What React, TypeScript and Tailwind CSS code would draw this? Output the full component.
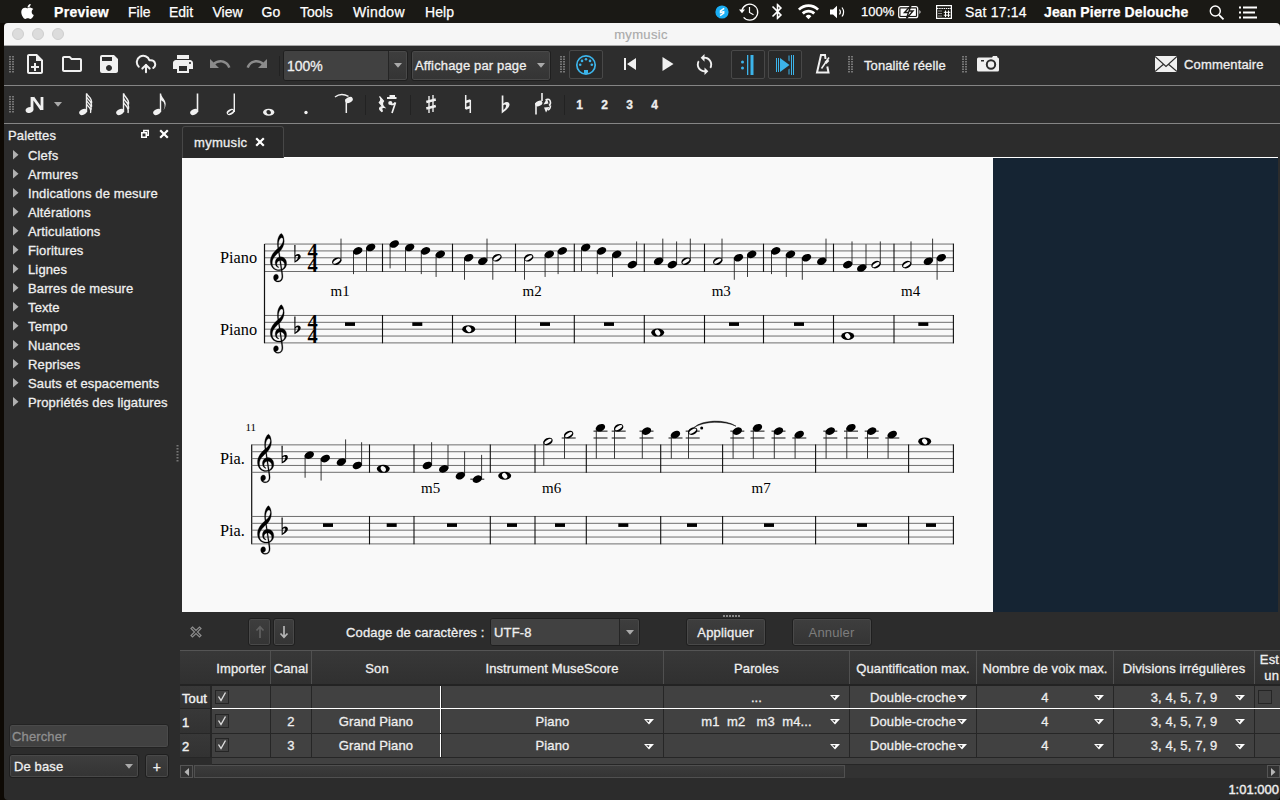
import React from "react";
import { FaApple } from "react-icons/fa";
import {
  MdBluetooth,
  MdLoop,
  MdOutlineFolder,
  MdOutlineNoteAdd,
  MdPrint,
  MdRedo,
  MdSave,
  MdUndo,
  MdWifi,
} from "react-icons/md";
import { CloudUpload } from "lucide-react";

/* ---------- menu bar ---------- */

function MenuBar() {
  return (
    <div className="flex h-[23px] shrink-0 items-center bg-[#1a1915] text-[14px] text-white [-webkit-text-stroke:0.25px_#fff]">
      <div className="flex w-[54px] justify-center pb-px">
        <FaApple size={17} />
      </div>
      <div className="w-[74px] font-bold tracking-[0.3px]">Preview</div>
      <div className="w-[41px]">File</div>
      <div className="w-[43.5px]">Edit</div>
      <div className="w-[49px]">View</div>
      <div className="w-[38.5px]">Go</div>
      <div className="w-[53px]">Tools</div>
      <div className="w-[72px] tracking-[0.35px]">Window</div>
      <div className="w-[287px] tracking-[0.1px]">Help</div>
      <svg className="h-[22px] w-[146px] shrink-0" viewBox="712 0 146 22" fill="none" stroke="#fff">
        <circle cx="722" cy="11" r="6.6" fill="#1aaef5" stroke="none" />
        <path d="M724.2 7.3l-3.7 2.5v1.7l3.2-.8v1.5l-3.6 2.4" strokeWidth="1.5" />
        <path d="M742 9a8 8 0 1 1 1.6 7.3" strokeWidth="1.3" />
        <path d="M739 8.5h6l-3 3.8z" fill="#fff" stroke="none" />
        <path d="M749.5 6v5.5l4 2.3" strokeWidth="1.2" />
      </svg>
      <div className="-ml-[90px] flex w-[96px] items-center">
        <div className="flex w-[29px] justify-start">
          <MdBluetooth size={19} strokeWidth={0} />
        </div>
        <MdWifi size={23} strokeWidth={0} />
        <svg className="ml-[8px] h-[22px] w-[24px]" viewBox="827 0 24 22" fill="none" stroke="#fff">
          <path d="M829 8.5h3l4-3.7v12.4l-4-3.7h-3z" fill="#fff" stroke="none" />
          <path d="M838.5 8.5q1.8 2.5 0 5M841 6.5q3.2 4.5 0 9" strokeWidth="1.2" />
        </svg>
      </div>
      <div className="-ml-[3px] w-[37px] text-[13px]">100%</div>
      <svg className="h-[22px] w-[67px] shrink-0" viewBox="898 0 67 22" fill="none" stroke="#fff">
        <rect x="898.7" y="5.7" width="19" height="11" rx="2" strokeWidth="1.2" />
        <path d="M919.5 9v4q2-2 0-4z" fill="#fff" stroke="none" />
        <rect x="900.5" y="7.5" width="15.4" height="7.4" fill="#fff" stroke="none" />
        <path d="M911 4.5l-6.5 7h4l-2 6 6.5-7.500h-4z" fill="#fff" stroke="#1a1915" strokeWidth="1.4" />
        <rect x="936.6" y="4.600" width="14.800" height="12.800" strokeWidth="1.2" />
        <path d="M937 7.500h14" strokeWidth="1" strokeDasharray="1.500 .7" />
        <path d="M938.500 10h4M938.500 12.500h4M938.500 15h4" strokeWidth="1" strokeDasharray="1 1" />
        <path d="M945.500 9.500v6.500M948.500 9.500v6.500M943.800 11.300h6.500M943.800 14.200h6.500" strokeWidth="1" />
      </svg>
      <div className="w-[79px] whitespace-nowrap tracking-[0.2px]">Sat 17:14</div>
      <div className="w-[164px] whitespace-nowrap font-bold tracking-[0.1px]">Jean Pierre Delouche</div>
      <svg className="h-[22px] w-[60px] shrink-0" viewBox="1208 0 60 22" fill="none" stroke="#fff">
        <circle cx="1215.300" cy="10" r="5" strokeWidth="1.4" />
        <path d="M1219 13.800l4.500 4.500" strokeWidth="1.700" />
        <path d="M1243 6.500h14M1243 11.500h12M1243 16.500h14" strokeWidth="1.800" />
        <path d="M1239 6.500h2M1239 11.500h2M1239 16.500h2" strokeWidth="1.800" />
      </svg>
    </div>
  );
}

/* ---------- toolbar parts ---------- */

function Handle({ className = "" }: { className?: string }) {
  const rows = [0, 1, 2, 3, 4, 5, 6];
  return (
    <svg className={`h-[18px] w-[5px] shrink-0 ${className}`} viewBox="0 0 5 18" fill="#777">
      {rows.map((r) => (
        <g key={r}>
          <rect x="0" y={r * 2.5} width="2" height="1.5" />
          <rect x="3" y={r * 2.5} width="2" height="1.5" />
        </g>
      ))}
    </svg>
  );
}

function Slot({ className, children }: { className: string; children?: React.ReactNode }) {
  return <div className={`flex h-full shrink-0 items-center justify-center pb-[3px] ${className}`}>{children}</div>;
}

function Caret({ className = "" }: { className?: string }) {
  return (
    <svg className={`h-[5px] w-[8px] shrink-0 ${className}`} viewBox="0 0 8 5">
      <path d="M0 0h8L4 4.800z" fill="#aaa" />
    </svg>
  );
}

function ToggleButton({ className = "", children }: { className?: string; children: React.ReactNode }) {
  return (
    <div className={`mb-[2px] flex h-[29px] w-[34px] shrink-0 items-center justify-center rounded-[2px] border border-[#484848] bg-[#292929] ${className}`}>
      {children}
    </div>
  );
}

const combo = "border border-[#1f1f1f] rounded-[3px] bg-linear-to-b from-[#3e3e3e] to-[#343434] shadow-[inset_0_0_0_1px_#494949]";

function MainToolbar() {
  return (
    <div className="flex h-[40px] shrink-0 items-center border-b border-[#858585] bg-[#2d2d2d] pl-[5px] text-[#efefef]">
      <Handle className="mb-[2px]" />
      <Slot className="ml-[2px] w-[37px]"><MdOutlineNoteAdd size={24} color="#f0f0f0" /></Slot>
      <Slot className="w-[37px]"><MdOutlineFolder size={24} color="#f0f0f0" /></Slot>
      <Slot className="w-[37px]"><MdSave size={24} color="#f0f0f0" /></Slot>
      <Slot className="w-[37px]"><CloudUpload size={22} strokeWidth={2.2} color="#f0f0f0" /></Slot>
      <Slot className="w-[37px]"><MdPrint size={24} color="#f0f0f0" /></Slot>
      <Slot className="w-[37px]"><MdUndo size={24} color="#8b8b8b" /></Slot>
      <Slot className="w-[37px]"><MdRedo size={24} color="#8b8b8b" /></Slot>
      <div className="ml-[4px] h-[20px] w-px bg-[#222]" />
      <div className={`ml-[3px] mb-px flex h-[31px] w-[125px] shrink-0 items-center overflow-hidden ${combo}`}>
        <div className="flex h-full flex-1 items-center border-r border-[#252525] bg-[#414141] pl-[3px] pt-px text-[14px]">100%</div>
        <div className="flex h-full w-[18px] items-center justify-center"><Caret /></div>
      </div>
      <div className={`ml-[3px] mb-px flex h-[31px] w-[140px] shrink-0 items-center whitespace-nowrap pl-[3px] pt-px text-[13px] tracking-[0.15px] ${combo}`}>
        Affichage par page
        <Caret className="ml-auto mr-[5px]" />
      </div>
      <Handle className="mb-[2px] ml-[9px]" />
      <ToggleButton className="ml-[4px]">
        <svg width="22" height="22" viewBox="0 0 22 22">
          <circle cx="11" cy="11" r="9.200" fill="none" stroke="#3cb4ea" strokeWidth="1.700" />
          <g fill="#3cb4ea">
            <circle cx="5.200" cy="10.700" r="1.300" />
            <circle cx="7" cy="6.900" r="1.300" />
            <circle cx="11" cy="5.200" r="1.300" />
            <circle cx="15" cy="6.900" r="1.300" />
            <circle cx="16.800" cy="10.700" r="1.300" />
            <path d="M9 20v-4h4v4z" />
          </g>
        </svg>
      </ToggleButton>
      <Slot className="ml-[8px] w-[38px]">
        <svg width="14" height="14" viewBox="0 0 14 14" fill="#f0f0f0"><path d="M1 1h2v12H1zM13 1v12L4 7z" /></svg>
      </Slot>
      <Slot className="w-[38px]">
        <svg width="12" height="14" viewBox="0 0 12 14" fill="#f0f0f0"><path d="M.5 0v14L11.500 7z" /></svg>
      </Slot>
      <Slot className="w-[35px]"><MdLoop size={23} color="#f0f0f0" /></Slot>
      <ToggleButton className="ml-[9px]">
        <svg width="16" height="22" viewBox="0 0 16 22" fill="#3cb4ea">
          <circle cx="2.500" cy="8" r="1.500" /><circle cx="2.500" cy="14" r="1.500" />
          <rect x="7" y="1" width="1.300" height="20" /><rect x="10.500" y="1" width="3" height="20" />
        </svg>
      </ToggleButton>
      <ToggleButton className="ml-[3px]">
        <svg width="20" height="22" viewBox="0 0 20 22" fill="#3cb4ea">
          <rect x="1" y="4" width="1" height="14" /><rect x="3" y="4" width="1" height="14" />
          <path d="M5 4v14L14.500 11z" />
          <path d="M13.500 1.500h1v6l-1-1zM13.500 15.500l1-1v6h-1zM16 1h1v20h-1zM18 1h1v20h-1z" />
        </svg>
      </ToggleButton>
      <Slot className="w-[41px]">
        <svg width="16" height="22" viewBox="0 0 16 22" fill="none" stroke="#f0f0f0">
          <path d="M10.500 6L10 2H6L2 19.500h11.500l-1.200-6" strokeWidth="2" />
          <path d="M6.500 15.500L14 4.500" strokeWidth="1.500" />
          <path d="M9.500 9l3-3 1.800 2-3 3z" fill="#f0f0f0" stroke="none" />
        </svg>
      </Slot>
      <Handle className="mb-[2px] ml-[5px]" />
      <div className="ml-[11px] w-[98px] shrink-0 whitespace-nowrap text-[13px] tracking-[0.1px]">Tonalité réelle</div>
      <Handle className="mb-[2px]" />
      <svg className="mb-[3px] ml-[10px] shrink-0" width="22" height="18" viewBox="0 0 22 18">
        <path d="M1.500 2.500H15L16 1h4l.5 1.500q1.500 0 1.500 1.500v11q0 1.500-1.500 1.500h-19Q0 16.500 0 15V4q0-1.500 1.500-1.500z" fill="#f0f0f0" />
        <circle cx="14" cy="9.500" r="4.200" fill="none" stroke="#2d2d2d" strokeWidth="2" />
        <path d="M4 5h3v1.500H4z" fill="#2d2d2d" />
      </svg>
      <svg className="mb-[3px] ml-[156px] shrink-0" width="22" height="16" viewBox="0 0 22 16">
        <rect width="22" height="16" fill="#f0f0f0" />
        <path d="M0 .5l11 10 11-10M0 15.500l8.500-7.200M22 15.500l-8.500-7.200" fill="none" stroke="#2d2d2d" strokeWidth="1.200" />
      </svg>
      <div className="mb-[2px] ml-[7px] text-[13px] tracking-[0.15px]">Commentaire</div>
    </div>
  );
}

/* Note-input icons share one coordinate space: x runs along the bar, y from its top edge. */
function Glyph({ x, w, children }: { x: number; w: number; children: React.ReactNode }) {
  return (
    <svg className="shrink-0" width={w} height="37" viewBox={`${x} 86 ${w} 37`} fill="#f0f0f0" stroke="none">
      {children}
    </svg>
  );
}

function SmallHead({ x, y, hollow = false }: { x: number; y: number; hollow?: boolean }) {
  return (
    <>
      <ellipse cx={x} cy={y} rx="4" ry="2.700" transform={`rotate(-25 ${x} ${y})`} />
      {hollow && <ellipse cx={x} cy={y} rx="3" ry="1" transform={`rotate(-32 ${x} ${y})`} fill="#2d2d2d" />}
    </>
  );
}

function NoteToolbar() {
  const line = { fill: "none", stroke: "#f0f0f0" };
  return (
    <div className="flex h-[38px] shrink-0 items-center border-b border-[#858585] bg-[#2d2d2d] pl-[5px] text-[#efefef]">
      <Handle />
      <div className="w-[3px]" />
      <Glyph x={17} w={37}>
        <path d="M32 97v12.500M33 97.500l8.500 12M42 97v13" {...line} strokeWidth="2.800" />
        <ellipse cx="29.500" cy="110" rx="4" ry="2.800" transform="rotate(-20 29.500 110)" />
      </Glyph>
      <Caret />
      <div className="w-[6px]" />
      <Glyph x={68} w={37}>
        <SmallHead x={83} y={112} />
        <path d="M86.500 93.500V112" {...line} strokeWidth="1.400" />
        <path d="M86.500 93.500c1 3 6 4 5 10M86.500 97c1 3 6 4 5 10M86.500 100.500c1 3 6 4 4.500 9.500M86.500 104c1 3 5.500 3 4 9" {...line} strokeWidth="1.300" />
      </Glyph>
      <Glyph x={105} w={37}>
        <SmallHead x={120} y={112} />
        <path d="M123.500 93.500V112" {...line} strokeWidth="1.400" />
        <path d="M123.500 93.500c1 4 6 5 5 11M123.500 98c1 4 6 4 5 11M123.500 102.500c1 3 6 4 4.500 10.500" {...line} strokeWidth="1.400" />
      </Glyph>
      <Glyph x={142} w={37}>
        <SmallHead x={157} y={112} />
        <path d="M160.500 93.500V112" {...line} strokeWidth="1.400" />
        <path d="M160 94h1c1 4 4.500 5.500 4.700 10q0 3.500-2.200 6.500q1.700-3.500 1-6-1-3.500-4.500-5z" />
      </Glyph>
      <Glyph x={179} w={37}>
        <SmallHead x={194} y={112} />
        <path d="M197.500 93.500V112" {...line} strokeWidth="1.600" />
      </Glyph>
      <Glyph x={216} w={37}>
        <SmallHead x={230.500} y={112} hollow />
        <path d="M234.300 93.500V112" {...line} strokeWidth="1.400" />
      </Glyph>
      <Glyph x={253} w={37}>
        <path fillRule="evenodd" d="M263 112.200a5.700 3.500 0 1 0 11.400 0a5.700 3.500 0 1 0-11.400 0zM266.500 111q1.500-1.800 3.400-.5 1.600 1.500.9 3-1.500 1.500-3.300.4-1.500-1.400-1-2.900z" />
      </Glyph>
      <Glyph x={290} w={37}><circle cx="306" cy="112.500" r="1.700" /></Glyph>
      <Glyph x={327} w={37}>
        <path d="M335 97q6-4.500 13.500-.6" {...line} strokeWidth="1.500" />
        <path d="M346.300 99V113" {...line} strokeWidth="1.500" />
        <SmallHead x={349} y={100} />
      </Glyph>
      <div className="mx-[1px] h-[20px] w-px bg-[#222]" />
      <Glyph x={367} w={42}>
        <path d="M381 95l4 4.500q-2.500 3 1 6.500-4-.8-2.200 3.500l-.5.500q-5-4 .7-5l-3.200-4q3-2.500.2-6z" stroke="#f0f0f0" strokeWidth="1.200" transform="translate(-1.500 1.500)" />
        <path d="M387 98h9.500M389.500 96h5.500" {...line} strokeWidth="2" />
        <circle cx="390.300" cy="103" r="2.100" />
        <path d="M391 104.500q3.500 0 4.500-2l-3.500 10.500" {...line} strokeWidth="1.700" />
      </Glyph>
      <div className="mx-[1px] h-[20px] w-px bg-[#222]" />
      <Glyph x={412} w={37}>
        <path d="M429 96v17M433 95v17" {...line} strokeWidth="1.400" />
        <path d="M426.300 102l9.500-2.500M426.300 108.500l9.500-2.500" {...line} strokeWidth="2.500" />
      </Glyph>
      <Glyph x={449} w={37}>
        <path d="M465.700 95v14M470.300 100v13" {...line} strokeWidth="1.500" />
        <path d="M465.500 102l5-1.500M465.500 108.500l5-1.500" {...line} strokeWidth="2.500" />
      </Glyph>
      <Glyph x={486} w={37}>
        <path fillRule="evenodd" d="M501.700 95.500h1.700v8q2.500-2 4.800-1.200 2.500 1.500.4 5-2 3-6.900 6.200zM503.400 105.200v4.900q3-2.700 2.700-4.700-.8-1.700-2.700-.2z" />
      </Glyph>
      <Glyph x={523} w={41}>
        <path d="M536 103v11.500M542 93v8" {...line} strokeWidth="1.600" />
        <ellipse cx="538.800" cy="103.500" rx="3.800" ry="2.500" transform="rotate(-25 538.800 103.500)" />
        <path d="M545.500 100q3-1.500 4.500.5 1.500 3-1 5M550.500 105.500q0 3.500-2.500 4.500" {...line} strokeWidth="1.500" />
        <path d="M543.500 104.500l3.500-6 1.500 5zM549.500 107l-5.500.5 2 5z" />
      </Glyph>
      <div className="h-[20px] w-px bg-[#222]" />
      <div className="ml-[2px] flex text-center text-[12px] font-bold">
        <span className="w-[25px]">1</span>
        <span className="w-[25px]">2</span>
        <span className="w-[25px]">3</span>
        <span className="w-[25px]">4</span>
      </div>
    </div>
  );
}

/* ---------- palettes ---------- */

const palettes = [
  "Clefs", "Armures", "Indications de mesure", "Altérations", "Articulations", "Fioritures", "Lignes",
  "Barres de mesure", "Texte", "Tempo", "Nuances", "Reprises", "Sauts et espacements", "Propriétés des ligatures",
];

function Cross({ className = "", size = 10 }: { className?: string; size?: number }) {
  return (
    <svg className={`shrink-0 ${className}`} width={size} height={size} viewBox="0 0 10 10">
      <path d="M1.200 1.200l7.600 7.600M8.800 1.200l-7.600 7.600" stroke="#fff" strokeWidth="2.200" />
    </svg>
  );
}

function Palettes() {
  return (
    <div className="flex w-[172px] shrink-0 flex-col text-[13px] tracking-[0.13px] text-[#efefef]">
      <div className="flex h-[22px] items-center pl-[4px]">
        <span className="w-[133px]">Palettes</span>
        <svg className="mb-[2px] shrink-0" width="8" height="10" viewBox="0 0 8 10" fill="none" stroke="#fff" strokeWidth="1.500">
          <path d="M.75 3.800h4.500v4.500H.75zM2.800 3.300V1.500h4.500v4.800H5.500" />
        </svg>
        <Cross className="mb-[2px] ml-[10px]" />
      </div>
      {palettes.map((p) => (
        <div key={p} className="flex h-[19px] shrink-0 items-center whitespace-nowrap pl-[9px]">
          <svg className="mb-px mr-[9px] shrink-0" width="6" height="10" viewBox="0 0 6 10"><path d="M0 0l5.500 4.800L0 9.500z" fill="#b0b0b0" /></svg>
          <span>{p}</span>
        </div>
      ))}
      <div className="ml-[5px] mt-auto flex h-[24px] w-[160px] items-center rounded-[3px] border border-[#232323] bg-[#414141] pl-[2px] text-[#8f8f8f] shadow-[inset_0_0_0_1px_#4a4a4a]">
        Chercher
      </div>
      <div className="mb-[22px] ml-[5px] mt-[6px] flex h-[24px]">
        <div className={`flex w-[130px] items-center pl-[4px] ${combo}`}>
          De base
          <Caret className="ml-auto mr-[5px]" />
        </div>
        <div className={`ml-[6px] flex w-[24px] items-center justify-center pt-px text-[14px] ${combo}`}>+</div>
      </div>
    </div>
  );
}

/* ---------- score ---------- */

const SPACE = 6.86;

/* kind: q = quarter, h = half, w = whole; pos counts half-spaces up from the bottom line */
type Note = [x: number, pos: number, kind: "q" | "h" | "w", up?: boolean];

function NoteShape({ note, bottom }: { note: Note; bottom: number }) {
  const [x, pos, kind, up] = note;
  const y = bottom - (pos * SPACE) / 2;
  const ledgers: number[] = [];
  for (let p = 10; p <= pos; p += 2) ledgers.push(p);
  for (let p = -2; p >= pos; p -= 2) ledgers.push(p);
  const len = pos > 10 ? bottom - y - 2 * SPACE : Math.min(24.3, 22 + 0.6 * Math.abs(pos - 4));
  const tip = up ? y - len : y + len;
  const sx = up ? x + 4.3 : x - 4.2;
  return (
    <g>
      {ledgers.map((p) => (
        <path key={p} d={`M${x - 7} ${bottom - (p * SPACE) / 2}h14`} stroke="#111" strokeWidth="1" />
      ))}
      {kind === "w" ? (
        <>
          <ellipse cx={x} cy={y} rx="6.500" ry="4" />
          <ellipse cx={x} cy={y} rx="3.100" ry="2.300" fill="#f9f9f9" transform={`rotate(55 ${x} ${y})`} />
        </>
      ) : (
        <>
          <path d={`M${sx} ${y}V${tip}`} stroke="#222" strokeWidth=".9" />
          <ellipse cx={x} cy={y} rx="4.900" ry="3.500" transform={`rotate(-25 ${x} ${y})`} />
          {kind === "h" && (
            <ellipse cx={x} cy={y} rx="4" ry="1.600" fill="#f9f9f9" transform={`rotate(-32 ${x} ${y})`} />
          )}
        </>
      )}
    </g>
  );
}

function Staff({ left, bottom, bars, notes, rests, time }: {
  left: number; bottom: number; bars: number[]; notes: Note[]; rests: number[]; time?: boolean;
}) {
  const top = bottom - 4 * SPACE;
  const g = bottom - SPACE;
  const mid = bottom - 2 * SPACE;
  return (
    <g>
      {[0, 1, 2, 3, 4].map((i) => (
        <path key={i} d={`M${left} ${bottom - i * SPACE}H954`} stroke="#666" strokeWidth=".95" />
      ))}
      {bars.map((b) => (
        <path key={b} d={`M${b} ${top - 0.4}V${bottom + 0.4}`} stroke="#111" strokeWidth="1.100" />
      ))}
      <path
        transform={`translate(${left + 5.8} ${g - 0.9}) scale(.0243 -.0276)`}
        d="M364 -252c-245 0 -364 165 -364 339c0 202 153 345 297 464c12 10 11 12 9 24c-7 41 -14 106 -14 164c0 104 24 229 98 311c20 22 51 48 65 48c11 0 37 -28 52 -50c41 -60 65 -146 65 -233c0 -153 -82 -280 -190 -381c-6 -6 -8 -7 -6 -19l25 -145c3 -18 3 -18 29 -18c147 0 241 -113 241 -241c0 -113 -67 -198 -168 -238c-14 -6 -15 -5 -13 -17c11 -62 29 -157 29 -214c0 -170 -130 -200 -197 -200c-151 0 -190 98 -190 163c0 62 40 115 107 115c61 0 96 -47 96 -102c0 -58 -36 -85 -67 -94c-23 -7 -32 -10 -32 -17c0 -13 26 -29 80 -29c59 0 158 18 158 166c0 47 -15 134 -27 201c-2 12 -4 11 -15 9c-20 -4 -46 -6 -69 -6zM80 20c0 -139 113 -236 288 -236c20 0 40 2 56 5c15 3 16 3 14 14l-50 298c-2 11 -4 12 -20 8c-61 -17 -100 -60 -100 -117c0 -46 30 -89 72 -107c7 -3 15 -6 15 -13c0 -6 -4 -11 -12 -11c-7 0 -19 3 -27 6c-68 23 -115 87 -115 177c0 85 57 164 145 194c18 6 18 5 15 24l-21 128c-2 11 -4 12 -14 4c-47 -38 -93 -75 -153 -142c-83 -94 -93 -173 -93 -232zM470 943c-61 0 -133 -96 -133 -252c0 -32 2 -66 6 -92c2 -13 6 -14 13 -8c79 69 174 159 174 270c0 55 -27 82 -60 82zM441 117c-12 1 -13 -2 -11 -14l49 -285c2 -12 4 -12 16 -6c56 28 94 79 94 142c0 88 -67 156 -148 163z"
        stroke="#000" strokeWidth="10"
      />
      <path
        transform={`translate(${left + 30.3} ${mid})`}
        fillRule="evenodd"
        d="M-.5-12.800H.7L.6-2.500Q2.500-4.200 4.500-3.500 6.900-2 5.200.8 3.500 3.300-.3 5zM.7-1V3.200Q3.400.8 3.400-1.200 2.500-3 .7-1z"
      />
      {time && (
        <g fontFamily="'Liberation Serif', serif" fontWeight="700" fontSize="20.500" textAnchor="middle">
          <text x={left + 48} y={mid}>4</text>
          <text x={left + 48} y={bottom}>4</text>
        </g>
      )}
      {rests.map((r) => (
        <rect key={r} x={r - 5} y={top + SPACE} width="10" height="3.600" />
      ))}
      {notes.map((n) => (
        <NoteShape key={n[0]} note={n} bottom={bottom} />
      ))}
    </g>
  );
}

const bars1 = [382.5, 452.5, 515.5, 574.3, 644.3, 704.5, 763.5, 833.5, 894, 953.4];
const bars2 = [369.5, 414, 490.3, 535, 586.3, 660.7, 722.6, 815.6, 908.6, 953.4];

const melody1: Note[] = [
  [336.7, 3, "h", true], [357.7, 6, "q"], [370.7, 7, "q"],
  [394.3, 8, "q"], [409.7, 7, "q"], [425.5, 6, "q"], [440.3, 5, "q"],
  [468.7, 4, "q"], [482.7, 3, "q", true], [497, 4, "h"],
  [528.7, 4, "h"], [549.3, 5, "q"], [562.3, 6, "q"],
  [585.7, 7, "q"], [601.5, 6, "q"], [616.7, 5, "q"], [632.3, 2, "q", true],
  [658.5, 3, "q", true], [672.3, 2, "q", true], [686, 3, "h", true],
  [717.7, 3, "h", true], [738.5, 4, "q"], [751.7, 5, "q"],
  [775.7, 6, "q"], [790.5, 5, "q"], [806.5, 4, "q"], [821.7, 3, "q", true],
  [847.7, 2, "q", true], [861.7, 1, "q", true], [876, 2, "h", true],
  [906.7, 2, "h", true], [928.3, 3, "q", true], [941.3, 4, "q"],
];
const melody2: Note[] = [
  [309.3, 5, "q"], [325.3, 4, "q"], [341.3, 3, "q", true], [357.3, 2, "q", true],
  [383.3, 1, "w"],
  [427.3, 2, "q", true], [443.7, 1, "q", true], [460.3, -1, "q", true], [477.3, -2, "q", true],
  [504.7, -1, "w"],
  [548, 9, "h"], [568.7, 11, "h"],
  [600.5, 13, "q"], [618.7, 13, "h"], [646.5, 12, "q"],
  [675.5, 11, "q"], [692.7, 12, "h"],
  [737.3, 12, "q"], [757.5, 13, "q"], [778.5, 12, "q"], [799.3, 11, "q"],
  [830.3, 12, "q"], [851, 13, "q"], [871.7, 12, "q"], [892.3, 11, "q"],
  [924.7, 9, "w"],
];

function Score() {
  return (
    <svg className="shrink-0 bg-[#f9f9f9]" width="811" height="454" viewBox="182 158 811 454" fill="#000">
      <Staff left={264.5} bottom={271.5} bars={bars1} notes={melody1} rests={[]} time />
      <Staff
        left={264.5} bottom={342.9} bars={bars1} time
        notes={[[468.7, 4, "w"], [657.7, 3, "w"], [847.7, 2, "w"]]}
        rests={[350, 417.3, 545, 609, 734, 799, 923.3]}
      />
      <path d="M264.500 244V343.300M251.700 444.500V544.300" stroke="#111" strokeWidth="1.200" />
      <Staff left={251.7} bottom={472.3} bars={bars2} notes={melody2} rests={[]} />
      <Staff left={251.7} bottom={543.9} bars={bars2} notes={[]} rests={[328, 391.7, 452, 512, 560, 623.3, 692, 769, 862, 931]} />
      <circle cx="701.700" cy="428" r="1.500" />
      <path d="M694 427.500C702 419.500 726 419 736 426.200 725 420.500 704 421 694 427.500z" stroke="#000" strokeWidth=".5" />
      <g fontFamily="'Liberation Serif', serif" fontSize="16.300">
        <text x="220" y="263">Piano</text>
        <text x="220" y="335">Piano</text>
        <text x="220" y="464">Pia.</text>
        <text x="220" y="536">Pia.</text>
      </g>
      <g fontFamily="'Liberation Serif', serif" fontSize="15">
        <text x="330.500" y="296">m1</text>
        <text x="522.500" y="296">m2</text>
        <text x="711.700" y="296">m3</text>
        <text x="901" y="296">m4</text>
        <text x="421" y="493">m5</text>
        <text x="542" y="493">m6</text>
        <text x="751.500" y="493">m7</text>
      </g>
      <text x="245.500" y="431" fontFamily="'Liberation Serif', serif" fontSize="11">11</text>
    </svg>
  );
}

/* ---------- MIDI import panel ---------- */

function Arrow({ color, flip }: { color: string; flip?: boolean }) {
  return (
    <svg width="10" height="14" viewBox="0 0 10 14" fill="none" stroke={color} strokeWidth="1.700">
      <path d={flip ? "M5 1v11M1.500 8.500L5 12.300 8.500 8.500" : "M5 13V2M1.500 5.500L5 1.700 8.500 5.500"} />
    </svg>
  );
}

function ImportControls() {
  return (
    <div className="flex h-[38px] shrink-0 items-center pl-[10px] pt-[2px] text-[13px] tracking-[0.15px] text-[#efefef]">
      <svg width="12" height="12" viewBox="0 0 12 12" className="shrink-0" fill="none" stroke="#8c8c8c" strokeWidth="1.200">
        <path d="M2.500 1l3.500 3.500L9.500 1 11 2.500 7.500 6 11 9.500 9.500 11 6 7.500 2.500 11 1 9.500 4.500 6 1 2.500z" />
      </svg>
      <div className={`ml-[46px] flex h-[28px] w-[23px] items-center justify-center ${combo}`}><Arrow color="#606060" /></div>
      <div className={`ml-[2px] flex h-[28px] w-[22px] items-center justify-center ${combo}`}><Arrow color="#b5b5b5" flip /></div>
      <div className="ml-[51px] w-[144px] whitespace-nowrap">Codage de caractères :</div>
      <div className={`flex h-[28px] w-[150px] shrink-0 items-center overflow-hidden ${combo}`}>
        <div className="flex h-full flex-1 items-center border-r border-[#252525] bg-[#414141] pl-[3px] pt-px">UTF-8</div>
        <div className="flex h-full w-[19px] items-center justify-center"><Caret /></div>
      </div>
      <div className={`ml-[46px] flex h-[28px] w-[80px] items-center justify-center pr-px ${combo}`}>Appliquer</div>
      <div className={`ml-[26px] flex h-[28px] w-[80px] items-center justify-center pr-px text-[#7d7d7d] [-webkit-text-stroke:0] ${combo}`}>Annuler</div>
    </div>
  );
}

const grid =
  "grid shrink-0 grid-cols-[32px_59px_41px_129px_223px_186px_127px_137px_141px_25px] text-[13px] tracking-[0.12px] text-[#efefef]";

function Check({ on }: { on: boolean }) {
  return (
    <svg width="14" height="14" viewBox="0 0 14 14" className="mb-px ml-[3px] shrink-0">
      <rect x=".5" y=".5" width="13" height="13" fill="#414141" stroke="#252525" />
      {on && <path d="M3.500 6.500l2.500 4 4.500-8" fill="none" stroke="#ddd" strokeWidth="1.400" />}
    </svg>
  );
}

function Choice({ text, arrow = true }: { text: string; arrow?: boolean }) {
  return (
    <div className="flex items-center justify-center border-r border-[#262626] px-[9px]">
      {arrow && <span className="w-[10px] shrink-0" />}
      <span className="flex min-w-0 flex-1 justify-center whitespace-pre">{text}</span>
      {arrow && (
        <svg className="mt-[2px] shrink-0" width="10" height="6" viewBox="0 0 10 6">
          <path d="M0 0h10L5 5.500z" fill="#fff" />
          <path d="M2.200 1.300h3.300L4.800 3.300z" fill="#333" />
        </svg>
      )}
    </div>
  );
}

function Row({ className, head, channel, sound, instrument, lyrics, first }: {
  className: string; head: string; channel: string; sound: string; instrument: string; lyrics: string; first?: boolean;
}) {
  const edge = first ? "border-b border-white" : "border-b border-[#262626]";
  return (
    <div className={`${grid} ${className}`}>
      <div className="flex items-center border-b border-r-2 border-[#262626] bg-linear-to-b from-[#383838] to-[#323232] pl-[2px] pt-[2px] [-webkit-text-stroke:0.45px_#efefef]">{head}</div>
      <div className={`col-span-9 grid grid-cols-subgrid bg-[#414141] ${edge}`}>
        <div className="flex items-center border-r border-[#262626]"><Check on /></div>
        <div className="flex items-center justify-center border-r border-[#262626]">{channel}</div>
        <div className="flex items-center justify-center border-r border-white">{sound}</div>
        <div className="grid border-l border-[#262626]"><Choice text={instrument} arrow={!first} /></div>
        <Choice text={lyrics} />
        <Choice text="Double-croche" />
        <Choice text="4" />
        <Choice text="3, 4, 5, 7, 9" />
        <div className="flex items-center">{first && <Check on={false} />}</div>
      </div>
    </div>
  );
}

const headCell = "flex items-center justify-center border-r border-[#505050] whitespace-nowrap pt-px";

function ImportTable() {
  return (
    <div className="flex flex-col">
      <div className={`${grid} h-[36px] border-b-2 border-t border-b-[#232323] border-t-[#555] bg-linear-to-b from-[#383838] to-[#303030]`}>
        <div />
        <div className={headCell}>Importer</div>
        <div className={headCell}>Canal</div>
        <div className="flex items-center justify-center pl-px pt-px">Son</div>
        <div className={headCell}>Instrument MuseScore</div>
        <div className={headCell}>Paroles</div>
        <div className={headCell}>Quantification max.</div>
        <div className={headCell}>Nombre de voix max.</div>
        <div className={headCell}>Divisions irrégulières</div>
        <div className="flex flex-col items-end justify-center overflow-hidden pr-[1px] pt-px leading-[16px]">
          <span>Est</span>
          <span>un</span>
        </div>
      </div>
      <Row className="h-[23px]" head="Tout" channel="" sound="" instrument="" lyrics="..." first />
      <Row className="h-[25px]" head="1" channel="2" sound="Grand Piano" instrument="Piano" lyrics="m1  m2   m3  m4..." />
      <Row className="h-[24px]" head="2" channel="3" sound="Grand Piano" instrument="Piano" lyrics="" />
      <div className="ml-[32px] h-[7px] border-b border-[#262626] bg-[#414141]" />
      <div className="flex h-[13px] bg-[#323232]">
        <div className="flex w-[13px] items-center justify-center border border-[#555]">
          <svg width="5" height="8" viewBox="0 0 5 8"><path d="M5 0v8L.5 4z" fill="#b5b5b5" /></svg>
        </div>
        <div className="ml-px w-[651px] border border-[#505050] bg-linear-to-b from-[#3c3c3c] to-[#343434]" />
        <div className="ml-auto flex w-[13px] items-center justify-center border border-[#555]">
          <svg width="5" height="8" viewBox="0 0 5 8"><path d="M0 0v8l4.500-4z" fill="#b5b5b5" /></svg>
        </div>
      </div>
    </div>
  );
}

function Dots({ vertical }: { vertical?: boolean }) {
  return vertical ? (
    <svg width="3" height="18" viewBox="0 0 3 18"><path d="M1.500 0v18" stroke="#777" strokeWidth="2" strokeDasharray="1.500 1.500" /></svg>
  ) : (
    <svg width="18" height="2" viewBox="0 0 18 2"><path d="M0 1h18" stroke="#888" strokeWidth="2" strokeDasharray="2 1" /></svg>
  );
}

/* ---------- application ---------- */

export default function App() {
  return (
    <div className="flex h-[800px] w-[1280px] flex-col overflow-hidden bg-[#0d0904] font-['Liberation_Sans',Arial,sans-serif] leading-none">
      <MenuBar />
      <div className="ml-[4px] flex min-h-0 flex-1 flex-col overflow-hidden rounded-[4px] bg-[#2c2c2c] [-webkit-text-stroke:0.3px]">
        <div className="relative flex h-[23px] shrink-0 items-center justify-center border-b border-[#a8a8a8] bg-[#f6f6f6] pr-[2px] text-[13px] tracking-[0.35px] text-[#aaa] [-webkit-text-stroke:0.15px]">
          <div className="absolute left-[8px] flex gap-[8px]">
            <span className="size-[12px] rounded-full border border-[#cfcfcf] bg-[#dcdcdc]" />
            <span className="size-[12px] rounded-full border border-[#cfcfcf] bg-[#dcdcdc]" />
            <span className="size-[12px] rounded-full border border-[#cfcfcf] bg-[#dcdcdc]" />
          </div>
          mymusic
        </div>
        <MainToolbar />
        <NoteToolbar />
        <div className="flex min-h-0 flex-1">
          <Palettes />
          <div className="flex w-[4px] shrink-0 items-center pb-[16px]"><Dots vertical /></div>
          <div className="flex min-w-0 flex-1 flex-col">
            <div className="ml-[2px] mr-[2px] flex h-[34px] shrink-0 items-end">
              <div className="flex h-[32px] w-[102px] shrink-0 items-center rounded-t-[3px] border border-b-0 border-[#474747] bg-[#292929] pl-[11px] text-[13px] tracking-[0.3px] text-[#efefef]">
                mymusic
                <Cross className="mb-[2px] ml-[8px]" />
              </div>
              <div className="h-px flex-1 bg-white" />
            </div>
            <div className="ml-[2px] mr-[2px] flex h-[454px] shrink-0 bg-[#152433]">
              <Score />
            </div>
            <div className="flex h-0 justify-center overflow-visible pl-[3px] pt-[3px]"><Dots /></div>
            <div className="-mt-[3px] flex flex-col">
              <ImportControls />
              <ImportTable />
            </div>
            <div className="flex flex-1 items-center justify-end pr-[1px] text-[13px] text-[#efefef] [-webkit-text-stroke:0.4px]">1:01:000</div>
          </div>
        </div>
      </div>
    </div>
  );
}
